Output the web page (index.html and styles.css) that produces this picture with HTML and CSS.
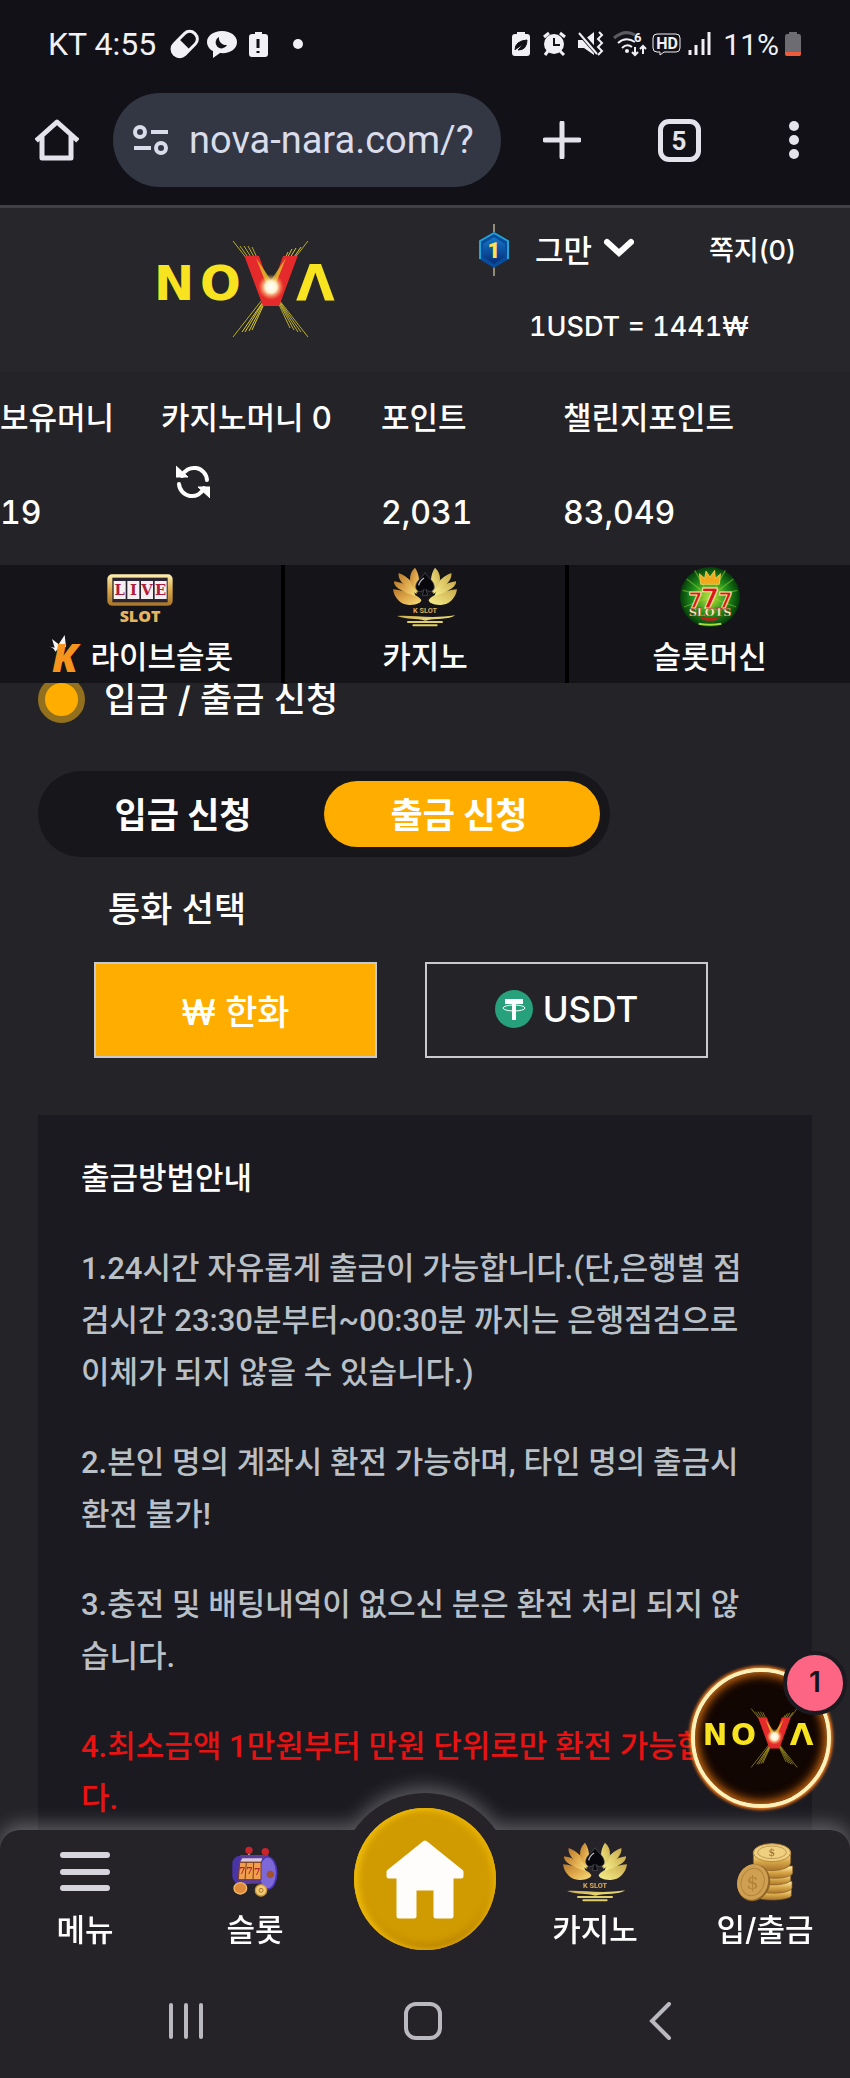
FILE: index.html
```html
<!DOCTYPE html>
<html lang="ko">
<head>
  <meta charset="UTF-8">
  <meta name="viewport" content="width=device-width, initial-scale=1.0">
  <title>입금 / 출금 신청</title>
  <link rel="stylesheet" href="styles.css">
</head>
<body>

  <!-- Shared drawings -->
  <svg class="defs" width="0" height="0" aria-hidden="true">
    <defs>
      <linearGradient id="gold" x1="0" y1="0" x2="1" y2="1">
        <stop offset="0" stop-color="#b87a2c"/>
        <stop offset="0.5" stop-color="#e0a94c"/>
        <stop offset="1" stop-color="#f6e27c"/>
      </linearGradient>
      <linearGradient id="goldLight" x1="0" y1="0" x2="0" y2="1">
        <stop offset="0" stop-color="#fff0b0"/>
        <stop offset="0.5" stop-color="#d9a94a"/>
        <stop offset="1" stop-color="#a8742a"/>
      </linearGradient>
      <linearGradient id="paleGold" x1="0" y1="0" x2="1" y2="1">
        <stop offset="0" stop-color="#c9a94a"/>
        <stop offset="1" stop-color="#f8f08c"/>
      </linearGradient>
      <radialGradient id="flare">
        <stop offset="0" stop-color="#ffffff"/>
        <stop offset="0.45" stop-color="#fff3d0"/>
        <stop offset="1" stop-color="#ff9a30" stop-opacity="0"/>
      </radialGradient>
      <radialGradient id="green">
        <stop offset="0" stop-color="#c8e63c"/>
        <stop offset="0.6" stop-color="#1f8f1a"/>
        <stop offset="1" stop-color="#053d0a"/>
      </radialGradient>
      <linearGradient id="blue" x1="0" y1="0" x2="0" y2="1">
        <stop offset="0" stop-color="#1478c8"/>
        <stop offset="1" stop-color="#062c78"/>
      </linearGradient>
    </defs>

    <symbol id="nova" viewBox="0 0 182 98">
      <g stroke="#b9ad2c" stroke-width="1">
        <path d="M75 1 L150 97 M82 6 L143 92 M86 6 L140 92 M90 6 L136 90 M94 7 L132 88"/>
        <path d="M150 1 L75 97"/>
        <path d="M143 7 L84 92 M138 8 L87 92 M134 9 L91 91 M130 12 L94 90" stroke="#d8c92c"/>
      </g>
      <g font-family="DejaVu Sans" font-weight="bold" fill="#f7e31f">
        <text x="-4" y="60" font-size="48">N</text>
        <text x="42" y="60" font-size="48">O</text>
        <text x="138" y="60" font-size="50">Λ</text>
        <text x="113" y="65" font-size="66" text-anchor="middle" fill="#e52a2c" stroke="#e52a2c" stroke-width="2">V</text>
      </g>
      <path d="M98 18 L113 40 L128 18 L117 46 H109Z" fill="#e6d52a" opacity="0.7"/>
      <circle cx="113" cy="47" r="13" fill="url(#flare)"/>
    </symbol>

    <symbol id="lotus" viewBox="0 0 198 178">
      <g fill="url(#gold)">
        <path d="M3 66 C6 92 28 115 55 113 C75 112 88 106 88 98 C75 80 40 70 3 66Z"/>
        <path d="M6 42 C4 62 40 76 70 86 C68 64 36 46 6 42Z"/>
        <path d="M20 17 C16 44 50 64 74 80 C76 54 48 28 20 17Z"/>
        <path d="M69 1 C48 20 48 50 76 76 C84 50 84 22 69 1Z"/>
      </g>
      <g fill="url(#paleGold)" transform="translate(198 0) scale(-1 1)">
        <path d="M3 66 C6 92 28 115 55 113 C75 112 88 106 88 98 C75 80 40 70 3 66Z"/>
        <path d="M6 42 C4 62 40 76 70 86 C68 64 36 46 6 42Z"/>
        <path d="M20 17 C16 44 50 64 74 80 C76 54 48 28 20 17Z"/>
        <path d="M69 1 C48 20 48 50 76 76 C84 50 84 22 69 1Z"/>
      </g>
      <path d="M99 16 C90 32 70 40 71 60 C73 75 90 76 96 66 L91 84 H107 L102 66 C108 76 127 74 127 60 C127 40 108 32 99 16Z" fill="#08080c" stroke="#55555f" stroke-width="2"/>
      <path d="M80 54 Q82 42 96 32" stroke="#b8b8c0" stroke-width="4" fill="none"/>
      <text x="99" y="138" text-anchor="middle" font-family="Roboto" font-weight="700" font-size="22" fill="#dcae58">K SLOT</text>
      <path d="M15 146 C60 142 110 156 190 144 C170 158 130 152 100 160 C70 152 50 158 15 146Z" fill="url(#paleGold)"/>
      <path d="M48 164 H150 M64 174 H134" stroke="#e0cf68" stroke-width="6" stroke-linecap="round"/>
    </symbol>
  </svg>

  <div class="status-bar">
    <div class="status-group">
      <span class="carrier">KT 4:55</span>
      <svg width="136" height="32" viewBox="168 28 136 32" aria-hidden="true">
        <g transform="rotate(-45 184 44)">
          <rect x="170" y="37" width="29" height="15" rx="7" fill="none" stroke="#f1f0f4" stroke-width="3"/>
          <path d="M184 36 V53 H177 A8 8 0 0 1 177 36 Z" fill="#f1f0f4"/>
        </g>
        <path d="M222 31 C213 31 207 36 207 42 C207 46 210 50 213 51 L213 58 L220 53 C230 54 237 49 237 42 C237 36 231 31 222 31Z" fill="#f1f0f4"/>
        <path d="M219 37 A6 6 0 1 0 227 45 A7 7 0 0 1 219 37Z" fill="#121118"/>
        <path d="M255 32 H262 V34 H265 Q268 34 268 37 V54 Q268 57 265 57 H252 Q249 57 249 54 V37 Q249 34 252 34 H255Z" fill="#f1f0f4"/>
        <path d="M258 39 V48 M258 51 V53" stroke="#121118" stroke-width="3"/>
        <circle cx="298" cy="44" r="5" fill="#f1f0f4"/>
      </svg>
    </div>
    <div class="status-group">
      <svg width="202" height="32" viewBox="510 28 202 32" aria-hidden="true">
        <path d="M518 32 H526 V34 H528 Q531 34 531 37 V53 Q531 56 528 56 H516 Q513 56 513 53 V37 Q513 34 516 34 H518Z" fill="#f1f0f4"/>
        <path d="M516 50 Q516 41 528 40 Q528 50 519 50 L524 45" fill="#121118" stroke="#121118" stroke-width="1"/>
        <circle cx="555" cy="44" r="10" fill="#f1f0f4"/>
        <path d="M545 37 L550 33 M566 37 L561 33 M549 51 L546 55 M561 51 L565 55" stroke="#f1f0f4" stroke-width="3"/>
        <path d="M555 38 V45 H561" fill="none" stroke="#121118" stroke-width="2"/>
        <path d="M579 40 H585 L595 32 V55 L585 48 H579Z" fill="#f1f0f4"/>
        <path d="M579 31 L601 56" stroke="#121118" stroke-width="5"/>
        <path d="M580 33 L598 54" stroke="#f1f0f4" stroke-width="2"/>
        <path d="M600 32 L603 35 L599 39 L603 43 L599 47 L603 51 L599 55" fill="none" stroke="#f1f0f4" stroke-width="2"/>
        <path d="M615 38 Q626 29 636 35" fill="none" stroke="#5b5a60" stroke-width="3"/>
        <path d="M619 43 Q627 36 636 42 M623 48 Q628 43 633 47" fill="none" stroke="#f1f0f4" stroke-width="2"/>
        <circle cx="628" cy="51" r="2" fill="#f1f0f4"/>
        <text x="635" y="42" font-family="Roboto" font-weight="700" font-size="13" fill="#f1f0f4">6</text>
        <path d="M636 47 V55 M633 52 L636 55 L639 52 M644 54 V46 M641 49 L644 46 L647 49" fill="none" stroke="#f1f0f4" stroke-width="2"/>
        <path d="M658 34 H677 Q681 34 681 38 V48 Q681 52 677 52 H665 L661 55 V52 H658 Q654 52 654 48 V38 Q654 34 658 34Z" fill="none" stroke="#f1f0f4" stroke-width="1"/>
        <text x="668" y="49" text-anchor="middle" font-family="Roboto" font-weight="700" font-size="16" fill="#f1f0f4">HD</text>
        <path d="M691 50 V55 M697 45 V55 M704 39 V55 M710 32 V55" stroke="#f1f0f4" stroke-width="3"/>
      </svg>
      <span class="percent">11%</span>
      <svg width="18" height="26" viewBox="0 0 18 26" aria-hidden="true">
        <path d="M5 1 H13 V3 H15 Q17 3 17 6 V22 Q17 25 15 25 H3 Q1 25 1 22 V6 Q1 3 3 3 H5Z" fill="#6d6c72"/>
        <path d="M1 21 H17 V22 Q17 25 15 25 H3 Q1 25 1 22Z" fill="#ee5a3a"/>
      </svg>
    </div>
  </div>

  <div class="browser-bar">
    <button class="browser-home" type="button" aria-label="홈">
      <svg width="44" height="44" viewBox="0 0 44 44">
        <path d="M3 21 L22 4 L41 21 M7 19 V40 H36 V19" fill="none" stroke="#e4e2ea" stroke-width="5" stroke-linejoin="round" stroke-linecap="square"/>
      </svg>
    </button>
    <div class="address">
      <svg width="36" height="30" viewBox="0 0 36 30" aria-hidden="true">
        <g fill="none" stroke="#d9dcea" stroke-width="4">
          <circle cx="7" cy="7" r="5"/>
          <circle cx="28" cy="23" r="5"/>
          <path d="M18 7 H35 M1 23 H18"/>
        </g>
      </svg>
      <input type="text" value="nova-nara.com/?" aria-label="주소">
    </div>
    <div class="browser-actions">
      <button type="button" aria-label="새 탭">
        <svg width="38" height="38" viewBox="0 0 38 38"><path d="M19 2 V36 M2 19 H36" stroke="#e4e2ea" stroke-width="5" stroke-linecap="round"/></svg>
      </button>
      <button type="button" aria-label="탭 목록"><span class="tab-count">5</span></button>
      <button type="button" aria-label="더보기">
        <svg width="10" height="38" viewBox="0 0 10 38"><g fill="#e4e2ea"><circle cx="5" cy="5" r="5"/><circle cx="5" cy="19" r="5"/><circle cx="5" cy="33" r="5"/></g></svg>
      </button>
    </div>
  </div>

  <header class="site-header">
    <div class="top">
      <a class="logo" href="#" aria-label="NOVA">
        <svg width="182" height="98"><use href="#nova"/></svg>
      </a>
      <div class="account">
        <div class="account-row">
          <svg width="32" height="52" viewBox="0 0 32 52" aria-hidden="true">
            <path d="M16 0 V52" stroke="#8f8c78" stroke-width="2"/>
            <path d="M16 8 L31 17 V35 L16 44 L1 35 V17Z" fill="#0a4c9c"/>
            <path d="M16 9 L30 17 V35 M16 9 L2 17 V35" fill="none" stroke="#1fa3d8" stroke-width="2"/>
            <path d="M16 13 L27 20 V33 L16 40 L5 33 V20Z" fill="url(#blue)"/>
            <text x="16" y="34" text-anchor="middle" font-family="Roboto" font-weight="900" font-size="22" fill="#ffe14a">1</text>
          </svg>
          <button class="user-menu" type="button">
            그만
            <svg width="30" height="20" viewBox="0 0 30 20" aria-hidden="true"><path d="M3 4 L15 15 L27 4" fill="none" stroke="#fff" stroke-width="6" stroke-linecap="round"/></svg>
          </button>
          <a class="messages" href="#">쪽지(0)</a>
        </div>
        <p class="rate">1USDT = 1441₩</p>
      </div>
    </div>

    <dl class="money">
      <div>
        <dt>보유머니</dt>
        <dd>19</dd>
      </div>
      <div>
        <dt>카지노머니 0</dt>
        <dd class="reload">
          <button type="button" aria-label="새로고침">
            <svg width="34" height="34" viewBox="0 0 34 34">
              <path d="M6 11 A13 13 0 0 1 31 15 M28 23 A13 13 0 0 1 3 19" fill="none" stroke="#fff" stroke-width="4" stroke-linecap="round"/>
              <path d="M0 1 L12 12 H0Z M34 33 L22 22 H34Z" fill="#fff" stroke="#fff" stroke-linejoin="round"/>
            </svg>
          </button>
        </dd>
      </div>
      <div>
        <dt>포인트</dt>
        <dd>2,031</dd>
      </div>
      <div>
        <dt>챌린지포인트</dt>
        <dd>83,049</dd>
      </div>
    </dl>

    <nav class="games">
      <a href="#">
        <svg width="66" height="60" viewBox="0 0 198 180" aria-hidden="true">
          <rect x="1" y="22" width="196" height="94" rx="14" fill="url(#goldLight)"/>
          <rect x="16" y="32" width="166" height="74" fill="#2a2430"/>
          <g fill="#f4eff0"><rect x="20" y="42" width="36" height="54"/><rect x="61" y="42" width="36" height="54"/><rect x="102" y="42" width="36" height="54"/><rect x="143" y="42" width="36" height="54"/></g>
          <g font-family="DejaVu Serif" font-weight="bold" font-size="44" fill="#b01c3c" text-anchor="middle">
            <text x="38" y="85">L</text><text x="79" y="85">I</text><text x="120" y="85">V</text><text x="161" y="85">E</text>
          </g>
          <text x="99" y="166" text-anchor="middle" font-family="Open Sans" font-weight="800" font-size="48" fill="#e6b45e">SLOT</text>
        </svg>
        <span>
          <svg width="36" height="38" viewBox="0 0 108 114" aria-hidden="true">
            <path d="M0 34 L20 38 L12 12 L32 28 L50 0 L54 36 Q34 36 22 50 Q16 36 0 34Z" fill="#f7f5f7"/>
            <text x="12" y="111" font-family="Open Sans" font-weight="800" font-style="italic" font-size="116" fill="#f7941d">K</text>
          </svg>
          라이브슬롯
        </span>
      </a>
      <a href="#">
        <svg width="66" height="60"><use href="#lotus"/></svg>
        <span>카지노</span>
      </a>
      <a href="#">
        <svg width="60" height="60" viewBox="0 0 180 180" aria-hidden="true">
          <circle cx="90" cy="90" r="90" fill="url(#green)"/>
          <g stroke="#8fd83c" stroke-width="4" opacity="0.5"><path d="M90 90 L20 36 M90 90 L8 70 M90 90 L160 36 M90 90 L172 70 M90 90 L12 120 M90 90 L168 120 M90 90 L44 10 M90 90 L136 10"/></g>
          <path d="M62 52 L58 20 L74 34 L78 12 L90 30 L104 10 L106 34 L122 20 L118 52Z" fill="#f2a81c" stroke="#ffdf70" stroke-width="2"/>
          <g font-family="DejaVu Sans" font-weight="bold" text-anchor="middle" fill="#d8181c" stroke="#ffe9a0" stroke-width="3">
            <text x="46" y="122" font-size="62">7</text>
            <text x="136" y="122" font-size="62">7</text>
            <text x="90" y="122" font-size="80">7</text>
          </g>
          <text x="90" y="146" text-anchor="middle" font-family="DejaVu Serif" font-weight="bold" font-size="34" fill="#fff2c8" stroke="#a01c10" stroke-width="1">SLOTS</text>
          <path d="M66 153 Q90 162 114 153" stroke="#c41c18" stroke-width="8" fill="none"/>
          <path d="M56 170 Q90 176 124 170" stroke="#a6dc3c" stroke-width="6" fill="none"/>
        </svg>
        <span>슬롯머신</span>
      </a>
    </nav>
  </header>

  <main>
    <h1>입금 / 출금 신청</h1>

    <div class="tabs">
      <button type="button">입금 신청</button>
      <button class="active" type="button">출금 신청</button>
    </div>

    <h2>통화 선택</h2>
    <div class="currency">
      <button class="active" type="button">₩ 한화</button>
      <button type="button">
        <svg width="38" height="38" viewBox="0 0 38 38" aria-hidden="true">
          <circle cx="19" cy="19" r="19" fill="#26a17b"/>
          <path d="M10 9 H28 V14 H21 V30 H17 V14 H10Z" fill="#fff"/>
          <ellipse cx="19" cy="18" rx="11" ry="3" fill="none" stroke="#fff"/>
        </svg>
        USDT
      </button>
    </div>

    <section class="guide">
      <h3>출금방법안내</h3>
      <p>1.24시간 자유롭게 출금이 가능합니다.(단,은행별 점검시간 23:30분부터~00:30분 까지는 은행점검으로 이체가 되지 않을 수 있습니다.)</p>
      <p>2.본인 명의 계좌시 환전 가능하며, 타인 명의 출금시 환전 불가!</p>
      <p>3.충전 및 배팅내역이 없으신 분은 환전 처리 되지 않습니다.</p>
      <p class="warning">4.최소금액 1만원부터 만원 단위로만 환전 가능합니다.</p>
    </section>
  </main>

  <button class="floating" type="button" aria-label="NOVA 알림">
    <svg width="112" height="60"><use href="#nova"/></svg>
    <span class="badge">1</span>
  </button>

  <footer class="dock">
    <nav class="dock-menu">
      <a href="#">
        <svg width="50" height="60" viewBox="0 0 50 60"><path d="M3 13 H47 M3 30 H47 M3 46 H47" stroke="#d6d4dc" stroke-width="6" stroke-linecap="round"/></svg>
        <span>메뉴</span>
      </a>
      <a href="#">
        <svg width="48" height="60" viewBox="0 -15 144 180">
          <path d="M54 30 V14 M103 34 V18" stroke="#b8b4c0" stroke-width="5"/>
          <circle cx="54" cy="10" r="11" fill="#c8242c"/><circle cx="103" cy="14" r="11" fill="#c8242c"/>
          <rect x="4" y="26" width="70" height="86" rx="24" fill="#4a35a8"/>
          <path d="M28 24 H112 V110 H28Z" fill="#5a3d9c"/>
          <ellipse cx="110" cy="78" rx="27" ry="48" fill="#7d68d8" stroke="#4a35b8" stroke-width="5"/>
          <circle cx="118" cy="82" r="11" fill="#a0522c"/>
          <path d="M34 34 H94 L90 44 H28Z" fill="#d8c8d8"/>
          <path d="M26 46 H90 V98 H22Z" fill="#f0a04c" stroke="#7a3c20" stroke-width="3"/>
          <path d="M46 46 L42 98 M68 46 L66 98" stroke="#7a3c20" stroke-width="3"/>
          <g font-family="DejaVu Serif" font-weight="bold" font-size="28" fill="#b02430"><text x="24" y="80">7</text><text x="46" y="82">7</text><text x="69" y="84">7</text></g>
          <ellipse cx="28" cy="124" rx="19" ry="17" fill="#e08a3c" stroke="#f4b868" stroke-width="4"/>
          <circle cx="90" cy="130" r="17" fill="#f4cc74" stroke="#c8923c" stroke-width="4"/>
          <circle cx="90" cy="130" r="6" fill="none" stroke="#a8742a" stroke-width="3"/>
        </svg>
        <span>슬롯</span>
      </a>
      <a class="dock-home" href="#" aria-label="홈">
        <svg width="80" height="80" viewBox="0 0 80 80"><path d="M40 4 L76 33 V37 H66 V77 H51 V49 H29 V77 H14 V37 H4 V33Z" fill="#fffdfb" stroke="#fffdfb" stroke-width="5" stroke-linejoin="round"/></svg>
      </a>
      <a href="#">
        <svg width="66" height="60"><use href="#lotus"/></svg>
        <span>카지노</span>
      </a>
      <a href="#">
        <svg width="58" height="60" viewBox="0 0 174 180">
          <g fill="url(#goldLight)" stroke="#8a5c20" stroke-width="2">
            <path d="M60 146 V166 A56 14 0 0 0 166 162 V142Z"/>
            <path d="M62 122 V142 A54 16 0 0 0 168 138 V118Z"/>
            <path d="M60 98 V118 A54 16 0 0 0 164 116 V96Z"/>
            <path d="M62 74 V94 A54 16 0 0 0 170 92 V72Z"/>
            <path d="M52 30 V62 A56 24 0 0 0 164 62 V30Z"/>
          </g>
          <ellipse cx="108" cy="32" rx="56" ry="27" fill="#efcf80" stroke="#b88a3c" stroke-width="3"/>
          <ellipse cx="108" cy="31" rx="43" ry="19" fill="none" stroke="#a8803c" stroke-width="2"/>
          <text x="108" y="43" text-anchor="middle" font-family="DejaVu Serif" font-size="32" fill="#97702c">$</text>
          <ellipse cx="53" cy="122" rx="49" ry="56" transform="rotate(18 53 122)" fill="#8f6428"/>
          <ellipse cx="50" cy="120" rx="46" ry="54" transform="rotate(18 50 120)" fill="#d0a052"/>
          <ellipse cx="50" cy="120" rx="34" ry="42" transform="rotate(18 50 120)" fill="none" stroke="#b28438" stroke-width="3"/>
          <text x="50" y="141" text-anchor="middle" font-family="DejaVu Serif" font-size="58" fill="#b28438">$</text>
        </svg>
        <span>입/출금</span>
      </a>
    </nav>
    <div class="system-nav">
      <button type="button" aria-label="최근 앱">
        <svg width="36" height="38" viewBox="0 0 36 38"><path d="M3 3 V35 M18 3 V35 M33 3 V35" stroke="#bbb9c0" stroke-width="4" stroke-linecap="round"/></svg>
      </button>
      <button type="button" aria-label="홈 화면">
        <svg width="38" height="38" viewBox="0 0 38 38"><rect x="2" y="2" width="34" height="34" rx="10" fill="none" stroke="#bbb9c0" stroke-width="4"/></svg>
      </button>
      <button type="button" aria-label="뒤로">
        <svg width="22" height="38" viewBox="0 0 22 38"><path d="M20 2 L3 19 L20 36" fill="none" stroke="#bbb9c0" stroke-width="4" stroke-linecap="round"/></svg>
      </button>
    </div>
  </footer>

</body>
</html>
```

FILE: styles.css
```css
*,
*::before {
  margin: 0;
  padding: 0;
  box-sizing: border-box;
}

body {
  font-family: Inter, "Noto Sans CJK KR", sans-serif;
  font-size: 31px;
  font-weight: 500;
  background-color: #242328;
  color: #fff;
  min-height: 100vh;
}

button {
  font: inherit;
  color: inherit;
  background: none;
  border: none;
  cursor: pointer;
}

a {
  color: inherit;
  text-decoration: none;
}

svg {
  display: block;
  flex: none;
}

.defs {
  position: absolute;
}

/* Phone status bar */
.status-bar {
  display: flex;
  justify-content: space-between;
  align-items: center;
  height: 88px;
  padding: 0 48px;
  background-color: #121118;
  color: #f1f0f4;
  font-family: Roboto, sans-serif;
  font-size: 32px;
  font-weight: 400;
}

.status-group {
  display: flex;
  align-items: center;
  gap: 12px;
}

.percent {
  margin-right: -7px;
  font-size: 30px;
}

/* Browser toolbar */
.browser-bar {
  display: flex;
  align-items: center;
  height: 120px;
  padding: 5px 0 18px 35px;
  background-color: #121118;
  border-bottom: 3px solid #414046;
}

.browser-home {
  margin-right: 34px;
}

.address {
  flex: 1;
  min-width: 0;
  display: flex;
  align-items: center;
  gap: 20px;
  height: 94px;
  margin-right: 3px;
  padding: 0 16px 0 20px;
  border-radius: 47px;
  background-color: #333643;
}

.address input {
  flex: 1;
  min-width: 0;
  border: none;
  outline: none;
  background: none;
  color: #d9dcea;
  font-family: Roboto, sans-serif;
  font-size: 38px;
}

.browser-actions {
  display: grid;
  grid-template-columns: 116px 118px 112px;
}

.browser-actions button {
  display: flex;
  align-items: center;
  justify-content: center;
}

.tab-count {
  width: 43px;
  height: 43px;
  border: 5px solid #e4e2ea;
  border-radius: 11px;
  color: #e4e2ea;
  font-family: Roboto, sans-serif;
  font-size: 26px;
  font-weight: 700;
  line-height: 34px;
}

/* Site header */
.site-header {
  position: relative;
  z-index: 1;
  background-color: #242328;
}

.top {
  display: flex;
  height: 164px;
  background-color: #27262b;
}

.logo {
  flex: 1;
  padding: 32px 0 0 158px;
}

.account {
  width: 372px;
  padding-top: 16px;
}

.account-row {
  display: flex;
  align-items: center;
  height: 52px;
}

.user-menu {
  display: flex;
  align-items: center;
  gap: 12px;
  margin: 0 auto 0 25px;
  padding-bottom: 4px;
}

.messages {
  margin-right: 54px;
  padding-bottom: 4px;
  font-size: 27px;
}

.rate {
  margin: 31px 0 0 51px;
  font-size: 27px;
  font-variant-numeric: tabular-nums;
  line-height: 40px;
}

.money {
  display: grid;
  grid-template-columns: 161fr 220fr 182fr 287fr;
  height: 193px;
  padding-top: 24px;
}

.money dt {
  line-height: 44px;
  white-space: nowrap;
}

.money dd {
  margin-top: 51px;
  font-size: 32px;
  font-variant-numeric: tabular-nums;
  line-height: 44px;
}

.money .reload {
  margin: 25px 0 0 15px;
}

.games {
  display: grid;
  grid-template-columns: repeat(3, 1fr);
  gap: 4px;
  height: 118px;
  background-color: #000;
}

.games a {
  display: flex;
  flex-direction: column;
  align-items: center;
  padding-top: 2px;
  background-color: #151419;
}

.games span {
  display: flex;
  align-items: center;
  gap: 7px;
  height: 54px;
}

/* Request form */
main {
  margin-top: -10px;
  padding: 0 38px;
}

h1 {
  display: flex;
  align-items: center;
  gap: 19px;
  font-size: 35px;
  font-weight: 500;
  line-height: 52px;
}

h1::before {
  content: "";
  width: 47px;
  height: 47px;
  border: 7px solid #92701e;
  border-radius: 50%;
  background-color: #ffae00;
}

.tabs {
  display: grid;
  grid-template-columns: 1fr 1fr;
  max-width: 572px;
  height: 86px;
  margin-top: 46px;
  padding: 10px;
  border-radius: 43px;
  background-color: #17161a;
}

.tabs button {
  padding: 0 6px 4px 0;
  border-radius: 33px;
  font-size: 35px;
  font-weight: 700;
}

.tabs .active {
  background-color: #ffae00;
}

h2 {
  margin: 26px 0 0 70px;
  font-size: 35px;
  font-weight: 500;
  line-height: 52px;
}

.currency {
  display: grid;
  grid-template-columns: repeat(2, 283px);
  gap: 48px;
  margin: 27px 0 0 56px;
}

.currency button {
  display: flex;
  align-items: center;
  justify-content: center;
  gap: 10px;
  height: 96px;
  padding-bottom: 2px;
  border: 2px solid #c9c9ce;
  font-size: 35px;
}

.currency .active {
  background-color: #ffae00;
}

.guide {
  margin-top: 57px;
  padding: 38px 47px 36px 43px;
  background-color: #1b1a20;
  color: #b9c0c7;
  font-family: Roboto, "Noto Sans CJK KR", sans-serif;
  line-height: 52px;
}

.guide h3 {
  color: #fff;
  font-size: 31px;
  font-weight: 500;
}

.guide p {
  margin-top: 38px;
}

.guide .warning {
  color: #e81212;
}

/* Floating notice */
.floating {
  position: fixed;
  right: 19px;
  bottom: 270px;
  z-index: 3;
  display: flex;
  align-items: center;
  justify-content: center;
  width: 140px;
  height: 140px;
  border: 4px solid #fff0b8;
  border-radius: 50%;
  background-color: #120602;
  box-shadow: 0 0 3px 2px #e8741c, inset 0 0 10px 3px #d06a10;
}

.badge {
  position: absolute;
  top: -21px;
  right: -20px;
  width: 64px;
  height: 64px;
  border: 4px solid #1b1a20;
  border-radius: 50%;
  background-color: #fd6585;
  color: #15141a;
  font-size: 28px;
  font-weight: 600;
  line-height: 54px;
}

/* Bottom dock */
.dock {
  position: fixed;
  left: 0;
  right: 0;
  bottom: 0;
  z-index: 2;
  border-radius: 20px 20px 0 0;
  background-color: #252328;
  filter: drop-shadow(0 -6px 9px rgba(255, 255, 255, 0.28));
}

.dock-menu {
  display: grid;
  grid-template-columns: repeat(5, 1fr);
  height: 134px;
}

.dock-menu a {
  display: flex;
  flex-direction: column;
  align-items: center;
  gap: 6px;
  padding-top: 12px;
  line-height: 44px;
}

.dock-menu .dock-home {
  position: relative;
  justify-self: center;
  justify-content: center;
  width: 142px;
  height: 142px;
  margin-top: -22px;
  padding: 0;
  border-radius: 50%;
  background-color: #d09b00;
  box-shadow: 0 0 0 15px #252328, inset 5px 0 6px #efbb08, inset -4px 3px 6px #e6b000, inset 0 -5px 8px #b37d06;
}

.system-nav {
  display: grid;
  grid-template-columns: repeat(3, 1fr);
  height: 114px;
  padding: 0 72px 0 68px;
}

.system-nav button {
  display: flex;
  align-items: center;
  justify-content: center;
}
```
